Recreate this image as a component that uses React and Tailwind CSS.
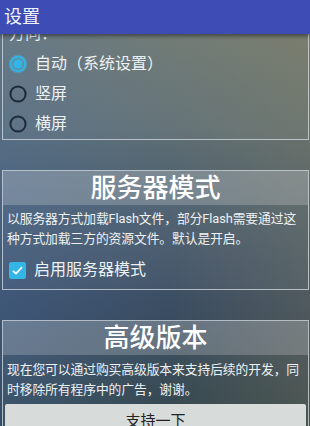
export default function App() {
  const Radio = ({ on }) => (
    <svg width="20" height="20" viewBox="0 0 20 20" className="shrink-0">
      {on ? (
        <>
          <circle cx="10" cy="10" r="9.5" fill="rgba(70,190,235,0.35)" />
          <circle cx="10" cy="10" r="7.2" fill="none" stroke="#33b5e5" strokeWidth="2" />
          <circle cx="10" cy="10" r="4.6" fill="#33b5e5" />
        </>
      ) : (
        <circle cx="10" cy="10" r="7.6" fill="none" stroke="#1d2a3a" strokeWidth="2" />
      )}
    </svg>
  );

  return (
    <div className="w-[310px] h-[426px] overflow-hidden relative font-['Roboto','Noto_Sans_CJK_SC',sans-serif] text-[#eef1f3] bg-[linear-gradient(90deg,rgba(70,110,170,0.3),rgba(70,110,170,0)_55%,rgba(140,125,80,0.25)),linear-gradient(180deg,#727a70_0%,#5f6f74_30%,#4a5d6e_50%,#3b4d62_72%,#2c3f45_100%)]">
      <div className="relative z-10 h-[34px] bg-[#3e4cb5] shadow-[0_2px_4px_rgba(0,0,0,0.45)] flex items-center pl-[4px]">
        <span className="text-[18px] leading-none text-[#f3f4fb]">设置</span>
      </div>

      <div className="flex flex-col">
        <div className="ml-[2px] mr-[1px] -mt-[15px] border-x border-b border-[rgba(215,222,228,0.75)] bg-[rgba(255,255,255,0.04)]">
          <div className="h-[30px] flex items-center pl-[6px] text-[16px]">方向：</div>
          <div className="h-[30px] flex items-center gap-[7px] pl-[5px] text-[16px]">
            <Radio on />
            <span>自动（系统设置）</span>
          </div>
          <div className="h-[30px] flex items-center gap-[7px] pl-[5px] text-[16px]">
            <Radio />
            <span>竖屏</span>
          </div>
          <div className="h-[30px] flex items-center gap-[7px] pl-[5px] text-[16px]">
            <Radio />
            <span>横屏</span>
          </div>
        </div>

        <div className="ml-[2px] mr-[1px] mt-[30px] border border-[rgba(215,222,228,0.75)] bg-[rgba(255,255,255,0.04)]">
          <div className="h-[34px] flex items-center justify-center bg-[rgba(255,255,255,0.2)] text-[26px] font-medium leading-none text-white">
            服务器模式
          </div>
          <div className="px-[4px] pt-[4px] text-[12.8px] leading-[19.5px] whitespace-nowrap tracking-[-0.1px]">
            以服务器方式加载Flash文件，部分Flash需要通过这<br />种方式加载三方的资源文件。默认是开启。
          </div>
          <div className="mt-[9px] h-[26px] flex items-center gap-[8px] pl-[6px] text-[16px]">
            <span className="w-[17px] h-[17px] rounded-[2px] bg-[#33b5e5] flex items-center justify-center shrink-0">
              <svg width="13" height="13" viewBox="0 0 13 13">
                <path d="M2 6.8 L5 9.6 L11 3.2" fill="none" stroke="#ffffff" strokeWidth="1.8" />
              </svg>
            </span>
            <span>启用服务器模式</span>
          </div>
          <div className="h-[6px]" />
        </div>

        <div className="ml-[2px] mr-[1px] mt-[30px] border border-[rgba(215,222,228,0.75)] bg-[rgba(255,255,255,0.04)]">
          <div className="h-[34px] flex items-center justify-center bg-[rgba(255,255,255,0.2)] text-[26px] font-medium leading-none text-white">
            高级版本
          </div>
          <div className="px-[4px] pt-[5px] text-[12.8px] leading-[19.5px] whitespace-nowrap tracking-[-0.1px]">
            现在您可以通过购买高级版本来支持后续的开发，同<br />时移除所有程序中的广告，谢谢。
          </div>
          <div className="mx-[2px] mt-[5px] h-[34px] bg-[#d7dbd9] rounded-[2px] flex items-center justify-center text-[15px] text-[#222]">
            支持一下
          </div>
          <div className="h-[6px]" />
        </div>
      </div>
    </div>
  );
}
